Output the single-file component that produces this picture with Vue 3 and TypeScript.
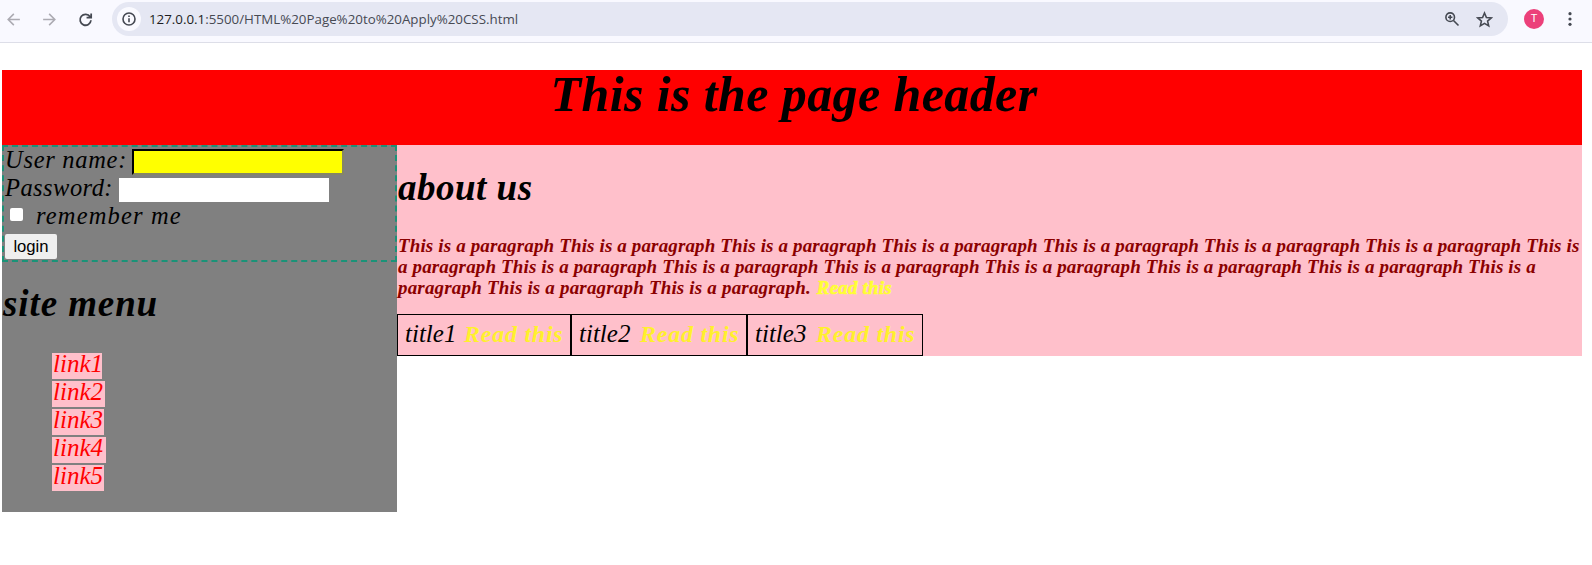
<script setup lang="ts">
const phrase = 'This is a paragraph '
const lines: string[] = [
  phrase.repeat(7) + 'This is',
  'a paragraph ' + phrase.repeat(6) + 'This is a',
]
const links: string[] = ['link1', 'link2', 'link3', 'link4', 'link5']
const cells: string[] = ['title1', 'title2', 'title3']
</script>

<template>
  <div class="window">
    <div class="toolbar">
      <svg class="nav back" viewBox="0 0 24 24"><path d="M21 12H4.500M12.500 4L4.500 12l8 8" /></svg>
      <svg class="nav forward" viewBox="0 0 24 24"><path d="M3 12h16.500M11.500 4l8 8-8 8" /></svg>
      <svg class="nav reload" viewBox="0 0 24 24"><path d="M18.500 8.200A7.700 7.700 0 1 0 19.700 13M20 3.500V9.500H13.500" /></svg>
      <div class="address">
        <span class="info">
          <svg viewBox="0 0 16 16"><circle cx="8" cy="8" r="6" /><path d="M8 7.200v4M8 4.600v1.500" /></svg>
        </span>
        <span class="url"><span class="host">127.0.0.1</span>:5500/HTML%20Page%20to%20Apply%20CSS.html</span>
        <svg class="zoom" viewBox="0 0 16 16"><circle cx="6.200" cy="6.200" r="4.300" /><path d="M9.500 9.500l5 5M6.200 4v4.400M4 6.200h4.400" /></svg>
        <svg class="star" viewBox="0 0 16 16"><path d="M8 1.900l1.800 4.200 4.600.4-3.500 3 1.050 4.500L8 11.600 4.050 14l1.050-4.500-3.500-3 4.600-.4z" /></svg>
      </div>
      <span class="avatar">T</span>
      <svg class="dots" viewBox="0 0 4 16"><circle cx="2" cy="2.700" r="1.600" /><circle cx="2" cy="8" r="1.600" /><circle cx="2" cy="13.300" r="1.600" /></svg>
    </div>

    <div class="page">
      <header><h1>This is the page header</h1></header>
      <div class="columns">
        <aside>
          <form @submit.prevent>
            <div class="row"><label class="user" for="user">User name:</label><input id="user" class="name" type="text" /></div>
            <div class="row"><label class="pass" for="pass">Password:</label><input id="pass" class="secret" type="password" /></div>
            <div class="row"><input id="remember" class="check" type="checkbox" /><label class="remember" for="remember">remember me</label></div>
            <button type="submit">login</button>
          </form>
          <h2 class="menu-title">site menu</h2>
          <ul>
            <li v-for="link in links" :key="link"><a :class="link">{{ link }}</a></li>
          </ul>
        </aside>
        <main>
          <h2 class="about">about us</h2>
          <p>
            <span v-for="line in lines" :key="line" class="line">{{ line }}</span>
            <span class="line last">paragraph {{ phrase }}This is a paragraph. <a class="read">Read this</a></span>
          </p>
          <div class="table">
            <div v-for="cell in cells" :key="cell" class="cell" :class="cell"><span class="title">{{ cell }}</span><a class="more">Read this</a></div>
          </div>
        </main>
      </div>
    </div>
  </div>
</template>

<style>
body {
  margin: 0;
  background: #fff;
}
</style>

<style scoped>
* {
  box-sizing: border-box;
}
.window {
  width: 1592px;
  height: 565px;
  overflow: hidden;
  background: #fff;
  font: italic 25px "Lucida Calligraphy", "Liberation Serif", serif;
  color: #000;
}
.toolbar {
  display: flex;
  align-items: center;
  height: 43px;
  padding-bottom: 4px;
  background: #f9f9ff;
  border-bottom: 1px solid #dddee8;
}
svg {
  flex: none;
  fill: none;
  stroke: #454952;
  stroke-width: 1.6;
}
.nav {
  width: 17px;
  height: 17px;
  stroke-width: 2.2;
}
.back,
.forward {
  stroke: #acabb2;
}
.back {
  margin-left: 5px;
}
.forward {
  margin-left: 19px;
}
.reload {
  margin-left: 19px;
  stroke-width: 2.5;
}
.address {
  display: flex;
  align-items: center;
  width: 1396px;
  height: 34px;
  margin-left: 18px;
  padding-left: 5px;
  border-radius: 17px;
  background: #e5e7f3;
}
.info {
  display: grid;
  place-items: center;
  width: 24px;
  height: 24px;
  border-radius: 50%;
  background: #fafaff;
}
.info svg {
  width: 16px;
  height: 16px;
}
.url {
  width: 1303px;
  padding-left: 8px;
  font: 13.330px/20px "Segoe UI", "Open Sans", sans-serif;
  color: #474a53;
  white-space: nowrap;
}
.host {
  color: #1c1d22;
}
.zoom {
  width: 16px;
  height: 16px;
}
.star {
  width: 17px;
  height: 17px;
  margin-left: 16px;
  stroke-width: 1.5;
}
.avatar {
  width: 20px;
  height: 20px;
  margin-left: 16px;
  border-radius: 50%;
  background: #ec407a;
  color: #fff;
  font: 11px/20px Roboto, sans-serif;
  text-align: center;
}
.dots {
  width: 4px;
  height: 16px;
  margin-left: 24px;
  fill: #454952;
  stroke: none;
}
.page {
  width: 1580px;
  margin: 27px 0 0 2px;
}
header {
  height: 75px;
  background: #f00;
}
h1,
h2,
p,
ul {
  margin: 0;
  padding: 0;
}
h1 {
  padding-left: 4px;
  font-size: 50px;
  line-height: 48px;
  letter-spacing: 0.400px;
  text-align: center;
}
.columns {
  display: flex;
  align-items: flex-start;
}
aside {
  width: 395px;
  height: 367px;
  background: #808080;
}
form {
  height: 117px;
  padding-left: 1px;
  border: 2px dashed #1a9378;
}
.row {
  display: flex;
  align-items: flex-start;
  height: 28px;
}
label {
  font-size: 24.500px;
  line-height: 25px;
  white-space: nowrap;
}
.user {
  width: 127px;
  letter-spacing: 0.700px;
}
.pass {
  width: 114px;
  letter-spacing: 0.450px;
}
.remember {
  margin-left: 13px;
  letter-spacing: 1.150px;
}
input {
  margin: 2px 0 0;
  padding: 0;
  border-radius: 0;
}
.name {
  width: 212px;
  height: 26px;
  border: 2px inset #767676;
  border-color: #2b2b16 #858566 #858566 #2b2b16;
  background: #ff0;
}
.secret {
  width: 210px;
  height: 24px;
  margin-top: 3px;
  border: 0;
  background: #fff;
}
.check {
  appearance: none;
  width: 13px;
  height: 13px;
  margin: 5px 0 0 5px;
  border-radius: 2px;
  background: #fff;
}
button {
  display: block;
  width: 52px;
  height: 25px;
  margin-top: 3px;
  padding: 0;
  border: 0;
  border-radius: 2px;
  background: #efefef;
  color: #000;
  font: 16.670px/23px Arial, "Liberation Sans", sans-serif;
}
h2 {
  font-size: 37px;
  line-height: 42px;
}
.menu-title {
  margin-top: 21px;
  padding-left: 1px;
  letter-spacing: 0.900px;
}
ul {
  margin-top: 28px;
  padding-left: 50px;
  list-style: none;
}
li {
  height: 28px;
}
li a {
  display: block;
  width: 52px;
  height: 26px;
  padding-left: 1px;
  background: #ffc0cb;
  color: #f00;
  line-height: 22px;
}
li .link1 {
  width: 50px;
}
li .link2 {
  width: 53px;
}
li .link4 {
  width: 54px;
}
main {
  width: 1185px;
  height: 211px;
  background: #ffc0cb;
}
.about {
  padding: 22px 0 0 1px;
  letter-spacing: 0.500px;
}
p {
  margin-top: 26px;
  padding-left: 1px;
  color: #8b0000;
  font-size: 19px;
  font-weight: bold;
  line-height: 21px;
  letter-spacing: 0.140px;
}
.line {
  display: block;
  white-space: nowrap;
}
.last {
  letter-spacing: 0.180px;
}
.read {
  margin-left: 1px;
  color: #ff3;
  -webkit-text-stroke: 0.600px #ff3;
}
.table {
  display: flex;
  height: 42px;
  margin-top: 16px;
}
.cell {
  width: 175px;
  padding-left: 7px;
  border: 1px solid #000;
  line-height: 38px;
  white-space: nowrap;
}
.cell.title1 {
  width: 174px;
}
.cell.title2 {
  width: 176px;
}
.cell.title3 {
  width: 176px;
}
.title {
  display: inline-block;
  width: 59px;
}
.title2 .title,
.title3 .title {
  width: 61px;
}
.more {
  color: #fff02c;
  font-size: 24px;
  font-weight: bold;
  letter-spacing: 0.750px;
}
</style>
